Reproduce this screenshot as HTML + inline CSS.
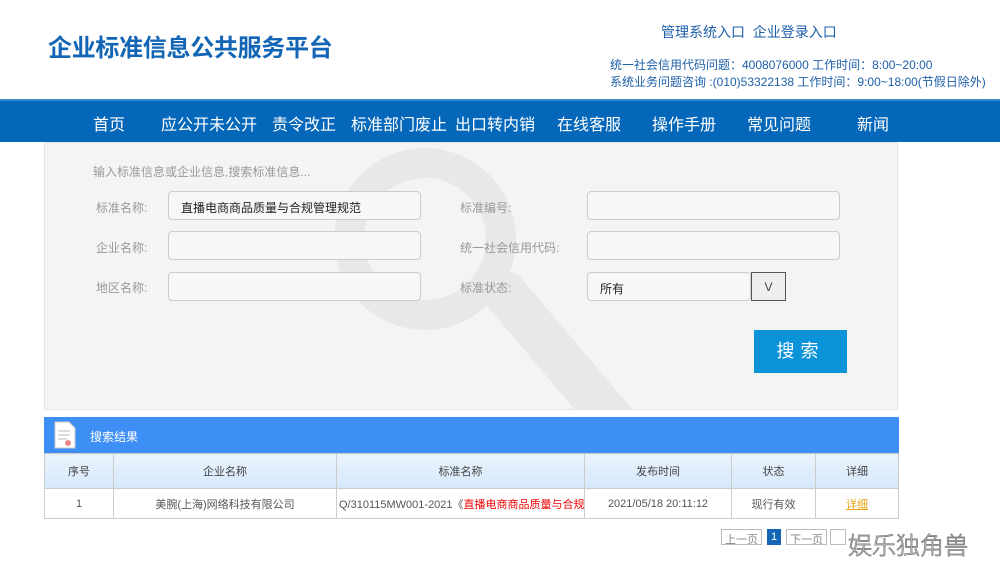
<!DOCTYPE html>
<html><head><meta charset="utf-8"><style>
*{margin:0;padding:0;box-sizing:border-box}
body{width:1000px;height:573px;background:#fff;font-family:"Liberation Sans","Noto Sans CJK SC",sans-serif;position:relative;overflow:hidden}
.a{position:absolute;white-space:nowrap}
.nav{position:absolute;left:0;top:99px;width:1000px;height:43px;background:#0567b9;border-top:2px solid #3b8ad0}
.nav span{position:absolute;top:10px;color:#fff;font-size:16px}
.panel{position:absolute;left:44px;top:142px;width:854px;height:268px;background:#f4f4f4;border:1px solid #e6e6e6;overflow:hidden}
.lbl{position:absolute;color:#999;font-size:12px}
.inp{position:absolute;width:253px;height:29px;border:1px solid #ccc;border-radius:4px;background:#f7f7f7;font-size:12px;padding:7px 12px;color:#222}
table{position:absolute;left:44px;top:453px;width:855px;border-collapse:collapse;font-size:11px;color:#555;table-layout:fixed}
td{border:1px solid #ccc;text-align:center;white-space:nowrap;overflow:hidden}
tr.h td{height:35px;background:linear-gradient(#eaf4fd,#d5e8fa);color:#444}
tr.r td{height:30px;background:#fff}
.pg{position:absolute;top:529px;height:16px;border:1px solid #bbb;font-size:11px;color:#888;padding:1px 3px;background:#fff}
</style></head><body>
<div class="a" style="left:48px;top:28px;font-size:24px;font-weight:bold;color:#1366b5;letter-spacing:-0.3px">企业标准信息公共服务平台</div>
<div class="a" style="left:661px;top:22px;font-size:14px;color:#1e5fa8">管理系统入口&nbsp; 企业登录入口</div>
<div class="a" style="left:610px;top:56px;font-size:12px;color:#1e5fa8">统一社会信用代码问题：4008076000 工作时间：8:00~20:00</div>
<div class="a" style="left:610px;top:73px;font-size:12px;color:#1e5fa8">系统业务问题咨询 :(010)53322138 工作时间：9:00~18:00(节假日除外)</div>
<div class="nav">
<span style="left:93px">首页</span><span style="left:161px">应公开未公开</span><span style="left:272px">责令改正</span><span style="left:351px">标准部门废止</span><span style="left:455px">出口转内销</span><span style="left:557px">在线客服</span><span style="left:652px">操作手册</span><span style="left:747px">常见问题</span><span style="left:857px">新闻</span>
</div>
<div class="panel">
<svg style="position:absolute;left:0;top:0" width="854" height="268"><circle cx="380" cy="96" r="76" fill="none" stroke="#e8e8e8" stroke-width="30"/><line x1="460" y1="150" x2="570" y2="280" stroke="#e8e8e8" stroke-width="44" stroke-linecap="round"/></svg>
<div class="lbl" style="left:48px;top:20px">输入标准信息或企业信息,搜索标准信息...</div>
<div class="lbl" style="left:51px;top:56px">标准名称:</div>
<div class="lbl" style="left:51px;top:96px">企业名称:</div>
<div class="lbl" style="left:51px;top:136px">地区名称:</div>
<div class="lbl" style="left:415px;top:56px">标准编号:</div>
<div class="lbl" style="left:415px;top:96px">统一社会信用代码:</div>
<div class="lbl" style="left:415px;top:136px">标准状态:</div>
<div class="inp" style="left:123px;top:48px">直播电商商品质量与合规管理规范</div>
<div class="inp" style="left:123px;top:88px"></div>
<div class="inp" style="left:123px;top:129px"></div>
<div class="inp" style="left:542px;top:48px"></div>
<div class="inp" style="left:542px;top:88px"></div>
<div class="inp" style="left:542px;top:129px;width:164px">所有</div>
<div style="position:absolute;left:706px;top:129px;width:35px;height:29px;border:1px solid #555;background:#eee;font-size:12px;text-align:center;line-height:28px;color:#444">V</div>
<div style="position:absolute;left:709px;top:187px;width:93px;height:43px;background:#0a93d8;color:#fff;font-size:18px;text-align:center;line-height:43px;letter-spacing:6px">搜索</div>
</div>
<div style="position:absolute;left:44px;top:417px;width:855px;height:36px;background:#3d8ef5"></div>
<svg style="position:absolute;left:54px;top:421px" width="22" height="28"><path d="M1 1h14l6 6v20H1z" fill="#fff" stroke="#ccc"/><path d="M4 10h12M4 14h12M4 18h9" stroke="#bbb"/><circle cx="14" cy="22" r="3" fill="#e88"/></svg>
<div class="a" style="left:90px;top:428px;font-size:12px;color:#fff">搜索结果</div>
<table>
<colgroup><col style="width:69px"><col style="width:223px"><col style="width:248px"><col style="width:147px"><col style="width:84px"><col></colgroup>
<tr class="h"><td>序号</td><td>企业名称</td><td>标准名称</td><td>发布时间</td><td>状态</td><td>详细</td></tr>
<tr class="r"><td>1</td><td>美腕(上海)网络科技有限公司</td><td style="text-align:left;padding-left:2px">Q/310115MW001-2021《<span style="color:#e00">直播电商商品质量与合规...</span></td><td>2021/05/18 20:11:12</td><td>现行有效</td><td style="color:#e8a317;text-decoration:underline">详细</td></tr>
</table>
<div class="pg" style="left:721px">上一页</div>
<div class="pg" style="left:767px;background:#1565b5;color:#fff;border-color:#1565b5">1</div>
<div class="pg" style="left:786px">下一页</div>
<div class="pg" style="left:830px;width:16px"></div>
<div class="a" style="left:848px;top:526px;font-size:24px;color:#fff;-webkit-text-stroke:0.8px #777;font-weight:300">娱乐独角兽</div>
</body></html>
